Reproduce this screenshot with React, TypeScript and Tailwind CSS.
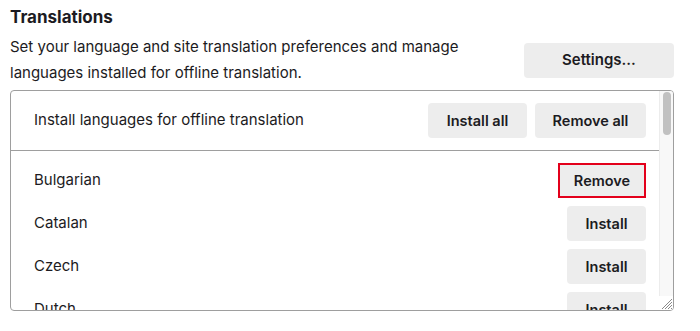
import type { ReactNode } from "react";

const languages = [
	{ name: "Bulgarian", installed: true },
	{ name: "Catalan", installed: false },
	{ name: "Czech", installed: false },
	{ name: "Dutch", installed: false },
	{ name: "English", installed: false },
];

function Button({
	children,
	className = "",
}: {
	children: ReactNode;
	className?: string;
}) {
	return (
		<button
			type="button"
			className={`flex h-[35px] items-center justify-center rounded-[4px] bg-[#ededed] text-[14.5px] font-semibold text-[#1c1b22] ${className}`}
		>
			{children}
		</button>
	);
}

export default function App() {
	return (
		<div
			className="h-[331px] w-[700px] overflow-hidden bg-white pl-[10px] pr-[26px] pt-[5px] text-[#1c1b22]"
			style={{ fontFamily: "Inter, 'Noto Sans', sans-serif" }}
		>
			<h1 className="text-[17px] font-bold leading-[24px]">Translations</h1>
			<div className="mt-[5px] flex items-center justify-between">
				<p className="w-[480px] text-[15px] leading-[26px]">
					Set your language and site translation preferences and manage
					languages installed for offline translation.
				</p>
				<Button className="w-[150px] text-[15px]">Settings...</Button>
			</div>

			<div className="mt-[4px] flex h-[221px] overflow-hidden rounded-[4px] border border-[#9e9e9e]">
				<div className="flex-1">
					<div className="flex h-[60px] items-center justify-between border-b border-[#9e9e9e] pl-[23px] pr-[13px]">
						<span className="text-[15px]">
							Install languages for offline translation
						</span>
						<div className="flex gap-[8px]">
							<Button className="w-[99px]">Install all</Button>
							<Button className="w-[111px]">Remove all</Button>
						</div>
					</div>
					<div className="pt-[8px]">
						{languages.map((l) => (
							<div
								key={l.name}
								className="flex h-[43px] items-center justify-between pl-[23px] pr-[13px]"
							>
								<span className="text-[15px]">{l.name}</span>
								{l.installed ? (
									<Button className="w-[88px] rounded-none border-2 border-[#e3001b]">
										Remove
									</Button>
								) : (
									<Button className="w-[79px]">Install</Button>
								)}
							</div>
						))}
					</div>
				</div>
				<div className="flex w-[14px] flex-col">
					<div className="flex-1 border-l border-[#ececec] bg-[#f8f8f8] pl-[3px] pt-[1px]">
						<div className="h-[43px] w-[8px] rounded-full bg-[#c1c1c1]" />
					</div>
					<svg width="14" height="14" viewBox="0 0 14 14" className="block">
						<rect width="14" height="14" fill="#ffffff" />
						<g stroke="#8a8a8a" strokeWidth="1">
							<line x1="13" y1="3" x2="3" y2="13" />
							<line x1="13" y1="6" x2="6" y2="13" />
							<line x1="13" y1="9" x2="9" y2="13" />
							<line x1="13" y1="12" x2="12" y2="13" />
						</g>
					</svg>
				</div>
			</div>
		</div>
	);
}
